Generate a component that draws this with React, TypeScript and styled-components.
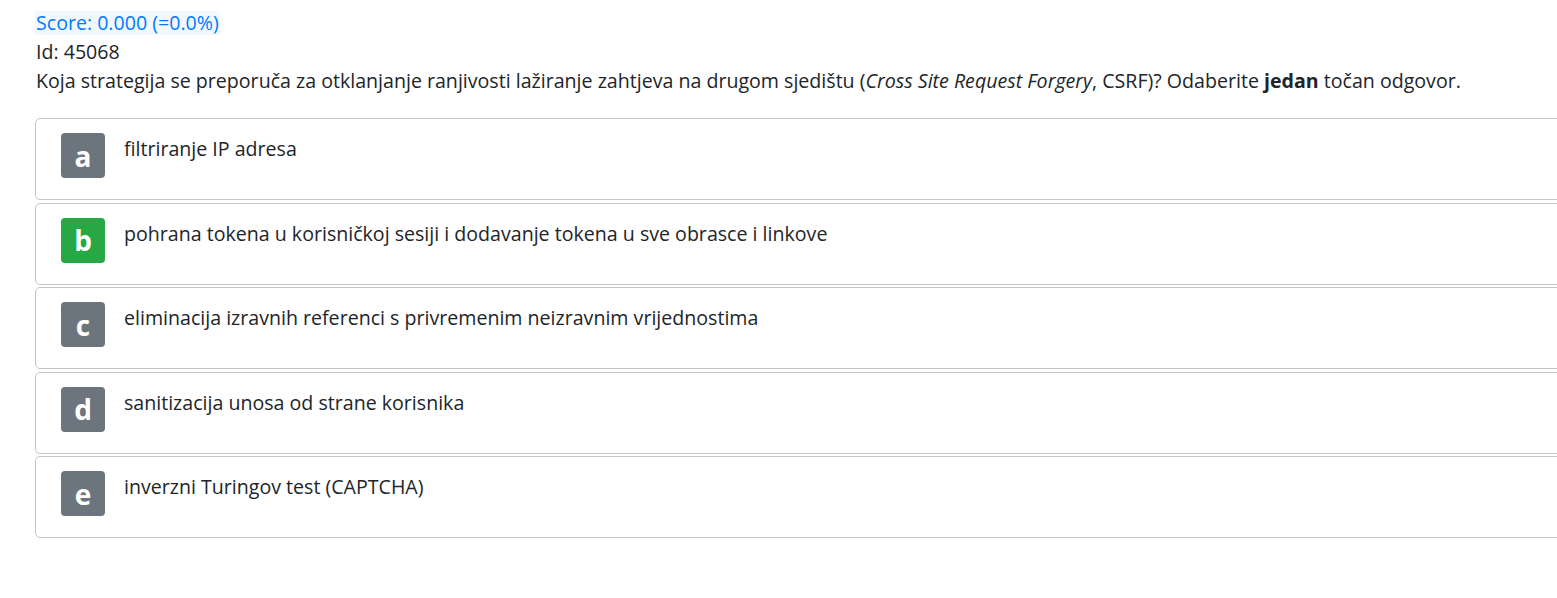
import styled, { createGlobalStyle } from 'styled-components';

const GlobalStyle = createGlobalStyle`
  html, body {
    margin: 0;
    padding: 0;
    background: #fff;
    overflow: hidden;
  }
  body {
    font-family: "Open Sans", "Noto Sans", sans-serif;
    color: #212529;
  }
`;

const answers = [
  { letter: 'a', text: 'filtriranje IP adresa', correct: false },
  {
    letter: 'b',
    text: 'pohrana tokena u korisničkoj sesiji i dodavanje tokena u sve obrasce i linkove',
    correct: true,
  },
  {
    letter: 'c',
    text: 'eliminacija izravnih referenci s privremenim neizravnim vrijednostima',
    correct: false,
  },
  { letter: 'd', text: 'sanitizacija unosa od strane korisnika', correct: false },
  { letter: 'e', text: 'inverzni Turingov test (CAPTCHA)', correct: false },
];

function App() {
  return (
    <Wrapper>
      <GlobalStyle />
      <Score>Score: 0.000 (=0.0%)</Score>
      <Meta>Id: 45068</Meta>
      <Question>
        Koja strategija se preporuča za otklanjanje ranjivosti lažiranje zahtjeva na drugom
        sjedištu (<em>Cross Site Request Forgery</em>, CSRF)? Odaberite <b>jedan</b> točan
        odgovor.
      </Question>
      <AnswerList>
        {answers.map((a) => (
          <AnswerCard key={a.letter}>
            <Badge $correct={a.correct}>{a.letter}</Badge>
            <AnswerText>{a.text}</AnswerText>
          </AnswerCard>
        ))}
      </AnswerList>
    </Wrapper>
  );
}

export default App;

const Wrapper = styled.main`
  padding: 9px 0 0 35px;
  font-size: 19.6px;
`;

const Score = styled.div`
  display: inline-block;
  padding: 0 1px;
  line-height: 24px;
  color: #007bff;
  background: #f3f8fc;
`;

const Meta = styled.div`
  line-height: 30px;
  margin-top: 1px;
  padding-left: 1px;
`;

const Question = styled.div`
  line-height: 28px;
  padding-left: 1px;

  em {
    font-style: italic;
  }
  b {
    font-weight: 700;
  }
`;

const AnswerList = styled.div`
  display: flex;
  flex-direction: column;
  gap: 2.5px;
  margin-top: 23px;
  width: 1560px;
`;

const AnswerCard = styled.div`
  display: flex;
  align-items: flex-start;
  gap: 19px;
  box-sizing: border-box;
  height: 82px;
  padding: 14px 25px;
  border: 1px solid #c4c4c4;
  border-radius: 5px;
`;

const Badge = styled.div<{ $correct: boolean }>`
  display: flex;
  align-items: center;
  justify-content: center;
  flex: none;
  width: 44px;
  height: 45px;
  border-radius: 4px;
  background: ${(p) => (p.$correct ? '#28a745' : '#6c757d')};
  color: #fff;
  font-size: 28px;
  font-weight: 700;
`;

const AnswerText = styled.div`
  line-height: 28px;
  padding-top: 2px;
`;
